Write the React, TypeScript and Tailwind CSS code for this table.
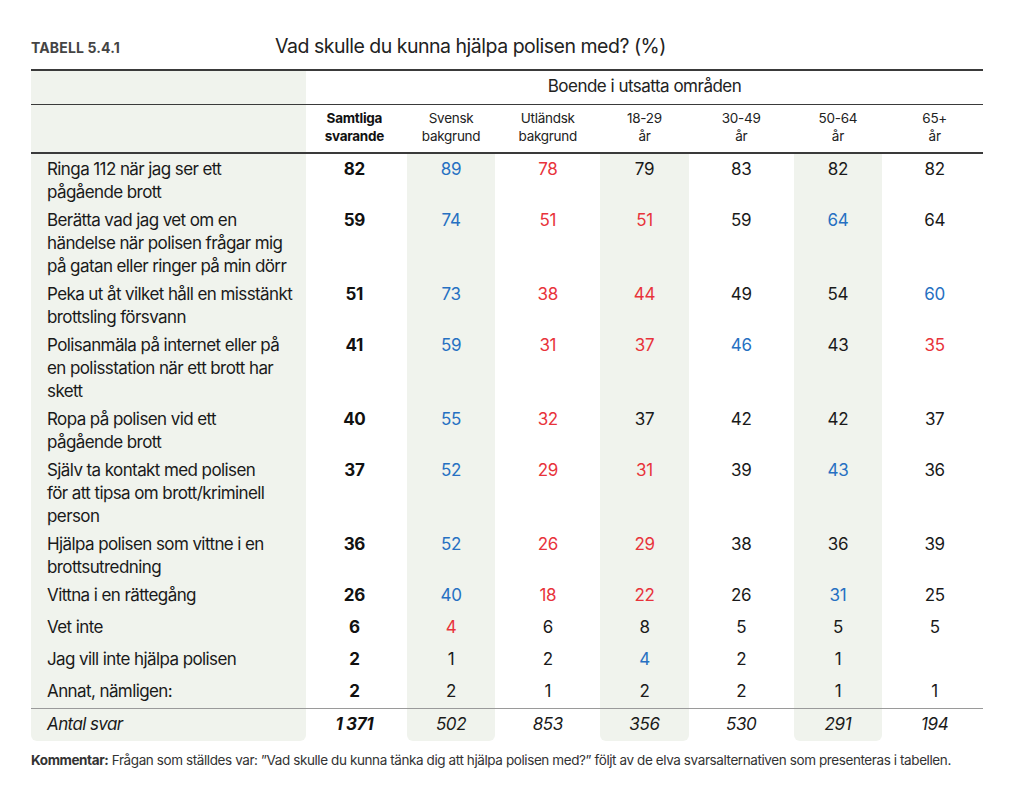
import React from "react";

type Cell = [string, "k" | "b" | "r"];

const rows: { label: string[]; v: Cell[] }[] = [
  { label: ["Ringa 112 när jag ser ett", "pågående brott"], v: [["82", "k"], ["89", "b"], ["78", "r"], ["79", "k"], ["83", "k"], ["82", "k"], ["82", "k"]] },
  { label: ["Berätta vad jag vet om en", "händelse när polisen frågar mig", "på gatan eller ringer på min dörr"], v: [["59", "k"], ["74", "b"], ["51", "r"], ["51", "r"], ["59", "k"], ["64", "b"], ["64", "k"]] },
  { label: ["Peka ut åt vilket håll en misstänkt", "brottsling försvann"], v: [["51", "k"], ["73", "b"], ["38", "r"], ["44", "r"], ["49", "k"], ["54", "k"], ["60", "b"]] },
  { label: ["Polisanmäla på internet eller på", "en polisstation när ett brott har", "skett"], v: [["41", "k"], ["59", "b"], ["31", "r"], ["37", "r"], ["46", "b"], ["43", "k"], ["35", "r"]] },
  { label: ["Ropa på polisen vid ett", "pågående brott"], v: [["40", "k"], ["55", "b"], ["32", "r"], ["37", "k"], ["42", "k"], ["42", "k"], ["37", "k"]] },
  { label: ["Själv ta kontakt med polisen", "för att tipsa om brott/kriminell", "person"], v: [["37", "k"], ["52", "b"], ["29", "r"], ["31", "r"], ["39", "k"], ["43", "b"], ["36", "k"]] },
  { label: ["Hjälpa polisen som vittne i en", "brottsutredning"], v: [["36", "k"], ["52", "b"], ["26", "r"], ["29", "r"], ["38", "k"], ["36", "k"], ["39", "k"]] },
  { label: ["Vittna i en rättegång"], v: [["26", "k"], ["40", "b"], ["18", "r"], ["22", "r"], ["26", "k"], ["31", "b"], ["25", "k"]] },
  { label: ["Vet inte"], v: [["6", "k"], ["4", "r"], ["6", "k"], ["8", "k"], ["5", "k"], ["5", "k"], ["5", "k"]] },
  { label: ["Jag vill inte hjälpa polisen"], v: [["2", "k"], ["1", "k"], ["2", "k"], ["4", "b"], ["2", "k"], ["1", "k"], ["", "k"]] },
  { label: ["Annat, nämligen:"], v: [["2", "k"], ["2", "k"], ["1", "k"], ["2", "k"], ["2", "k"], ["1", "k"], ["1", "k"]] },
];

const totals = ["1 371", "502", "853", "356", "530", "291", "194"];

const heads: string[][] = [
  ["Samtliga", "svarande"],
  ["Svensk", "bakgrund"],
  ["Utländsk", "bakgrund"],
  ["18-29", "år"],
  ["30-49", "år"],
  ["50-64", "år"],
  ["65+", "år"],
];

const colorCls: Record<string, string> = {
  k: "text-[#1a1a1a]",
  b: "text-[#2670c2]",
  r: "text-[#e8333b]",
};

const GRID = "grid grid-cols-[275px_repeat(7,minmax(0,1fr))] w-[952px]";
const BAND = "bg-[#f0f3ed]";

function Line({ light }: { light?: boolean }) {
  return <div className={`w-[952px] h-[1.5px] ${light ? "bg-[#9a9a9a]" : "bg-[#3a3a3a]"}`} />;
}

export default function App() {
  return (
    <div
      className="w-[1024px] h-[806px] bg-white pl-[31px] pt-[32px] text-[#1a1a1a]"
      style={{ fontFamily: "Inter, 'Liberation Sans', sans-serif" }}
    >
      <div className="flex items-baseline h-[24px]">
        <div className="w-[244px] text-[14px] font-bold text-[#444] tracking-[0.01em]">TABELL 5.4.1</div>
        <div className="text-[19.5px] text-[#222] tracking-[-0.025em]">Vad skulle du kunna hjälpa polisen med? (%)</div>
      </div>

      <div className="mt-[13px]">
        <Line />
        <div className={GRID}>
          <div className={`${BAND} h-[33px]`} />
          <div className="col-span-7 flex items-center justify-center text-[17px] text-[#222] tracking-[-0.03em] h-[33px]">
            Boende i utsatta områden
          </div>
        </div>
        <Line />
        <div className={GRID}>
          <div className={`${BAND} h-[47px]`} />
          {heads.map((h, i) => (
            <div
              key={i}
              className={`text-center pt-[4px] text-[13.5px] leading-[18px] tracking-[-0.02em] ${i === 0 ? "font-bold text-[#111]" : "text-[#222]"}`}
            >
              {h[0]}
              <br />
              {h[1]}
            </div>
          ))}
        </div>
        <Line />

        {rows.map((r, ri) => (
          <div key={ri} className={`${GRID} ${r.label.length === 1 ? "min-h-[32px]" : ""}`}>
            <div className={`${BAND} pl-4 pt-[4px] pb-[1px] text-[17px] leading-[23px] tracking-[-0.035em]`}>
              {r.label.map((l, li) => (
                <div key={li}>{l}</div>
              ))}
            </div>
            {r.v.map(([val, c], ci) => {
              const band = ci === 1 || ci === 3 || ci === 5;
              return (
                <div key={ci} className="flex px-[4px]">
                  <div
                    className={`flex-1 text-center pt-[4px] text-[17px] leading-[23px] tracking-[-0.02em] ${band ? BAND : ""} ${ci === 0 ? "font-bold text-[#111]" : colorCls[c]}`}
                  >
                    {val}
                  </div>
                </div>
              );
            })}
          </div>
        ))}

        <Line light />
        <div className={GRID}>
          <div className={`${BAND} rounded-b-[6px] pl-4 pt-[4px] h-[32px] text-[17px] leading-[23px] italic tracking-[-0.035em]`}>
            Antal svar
          </div>
          {totals.map((t, ci) => {
            const band = ci === 1 || ci === 3 || ci === 5;
            return (
              <div key={ci} className="flex px-[4px]">
                <div
                  className={`flex-1 text-center pt-[4px] h-[32px] text-[17px] leading-[23px] italic tracking-[-0.02em] rounded-b-[6px] ${band ? BAND : ""} ${ci === 0 ? "font-bold text-[#111]" : "text-[#1a1a1a]"}`}
                >
                  {t}
                </div>
              </div>
            );
          })}
        </div>

        <div className="mt-[11px] text-[13.5px] leading-[17px] text-[#333] tracking-[-0.03em]">
          <span className="font-bold">Kommentar:</span> Frågan som ställdes var: ”Vad skulle du kunna tänka dig att hjälpa polisen med?” följt av de elva svarsalternativen som presenteras i tabellen.
        </div>
      </div>
    </div>
  );
}
